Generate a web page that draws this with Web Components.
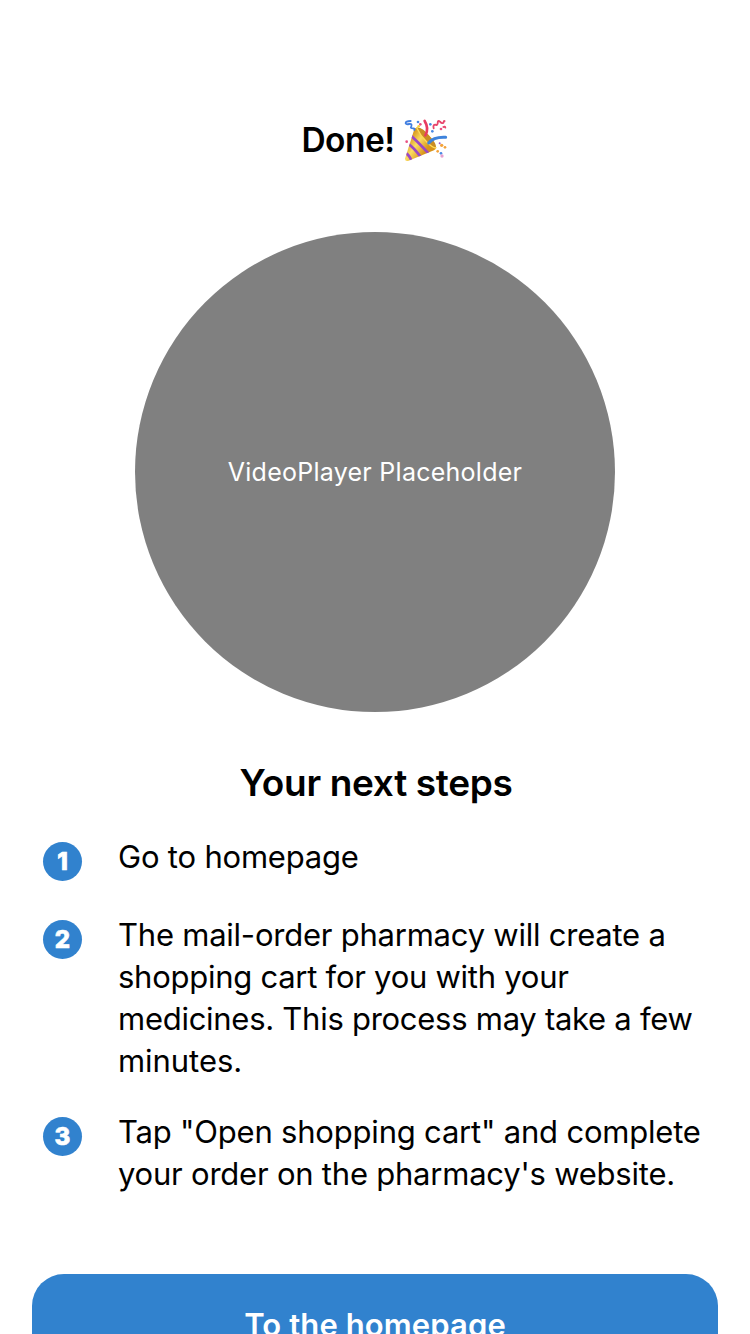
<!DOCTYPE html>
<html lang="en"><head><meta charset="utf-8"><title>Done</title>
<style>
html,body{margin:0;background:#fff;color:#000;font-family:Inter,"Liberation Sans",sans-serif}
body{height:1334px;overflow:hidden}
</style></head><body>
<order-done></order-done>
<script>
const define=(name,html)=>customElements.define(name,class extends HTMLElement{
  constructor(){super();this.attachShadow({mode:'open'}).innerHTML=html;}
});
define('party-popper',`<style>:host{display:block;width:50px;height:50px}svg{display:block}</style>
<svg width="50" height="50" viewBox="0 0 150 150" fill="none" stroke-linecap="round" stroke-linejoin="round">
<defs><linearGradient id="g" x1="25" y1="75" x2="75" y2="110" gradientUnits="userSpaceOnUse"><stop stop-color="#d99a20"/><stop offset=".45" stop-color="#fbdc62"/><stop offset="1" stop-color="#d8941c"/></linearGradient>
<clipPath id="c"><path d="M15 131L43 43Q48 35 57 39Q93 58 108 96Q109 103 102 106L24 138Q15 140 15 131Z"/></clipPath></defs>
<path d="M15 131L43 43Q48 35 57 39Q93 58 108 96Q109 103 102 106L24 138Q15 140 15 131Z" fill="url(#g)"/>
<g clip-path="url(#c)" stroke="#9a48c5" stroke-width="8"><path d="M34 63Q57 84 89 119"/><path d="M27 88Q40 97 61 124"/><path d="M17 114Q27 119 35 138"/></g>
<path d="M50 38Q66 36 88 62Q110 85 108 98Q101 102 81 82Q60 62 50 38Z" fill="#c98d25"/>
<path d="M50 38Q61 62 81 82Q101 102 108 98" stroke="#ffdc5a" stroke-width="4"/>
<path d="M76 61Q88 41 74 18" stroke="#e83b61" stroke-width="8"/>
<path d="M86 84Q101 65 137 67" stroke="#3e83dc" stroke-width="9"/>
<path d="M32 18Q16 18 17 25Q19 29 27 27Q37 25 34 34Q29 40 40 40Q46 41 43 45" stroke="#407ee0" stroke-width="5.5"/>
<path d="M101 40Q98 29 106 29Q112 32 113 25Q113 14 120 20Q126 28 131 22Q131 17 134 18M130 36Q135 33 136 38" stroke="#e8456c" stroke-width="5.5"/>
<g><g fill="#4989e4"><circle cx="54" cy="21" r="4"/><circle cx="91" cy="28" r="4"/><circle cx="123" cy="115" r="4"/><circle cx="97" cy="49" r="4"/></g><g fill="#f3a33b"><circle cx="125" cy="91" r="5"/><circle cx="135" cy="97" r="4"/><circle cx="113" cy="109" r="4"/></g><g fill="#e95183"><circle cx="20" cy="80" r="4"/><circle cx="61" cy="28" r="4"/><circle cx="123" cy="42" r="4"/></g><circle cx="126" cy="123" r="5" fill="#e6a1cf"/><circle cx="119" cy="85" r="3" fill="#9b59cf"/><circle cx="56" cy="34" r="4" fill="#f7d53e"/></g>
</svg>`);
define('page-title',`<style>:host{display:flex;justify-content:center;align-items:center;height:50px;padding-left:1px;font-weight:600;font-size:33.5px;line-height:50px}span{letter-spacing:-.5px;margin-right:5px;white-space:nowrap}</style><span><slot></slot></span><party-popper></party-popper>`);
define('video-placeholder',`<style>:host{display:flex;align-items:center;justify-content:center;width:480px;height:480px;margin:67px auto 0;border-radius:50%;background:#808080;color:#fff;font-size:25px;letter-spacing:.26px;white-space:nowrap}</style><slot></slot>`);
define('section-heading',`<style>:host{display:block;text-align:center;padding-left:2px;margin-top:47px;height:48px;line-height:48px;font-size:37px;font-weight:600;letter-spacing:-.33px}</style><slot></slot>`);
define('step-item',`<style>:host{display:grid;grid-template-columns:39px 1fr;column-gap:36px;padding-left:43px;font-size:31px;line-height:42px}
.n{width:39px;height:39px;margin-top:6px;border-radius:50%;background:#3182ce;color:#fff;font-size:24px;font-weight:800;line-height:39px;text-align:center;-webkit-text-stroke:.7px #fff}
</style><div class="n"><slot name="number"></slot></div><div><slot></slot></div>`);
define('text-line',`<style>:host{display:block;white-space:nowrap;letter-spacing:var(--track,-.2px)}</style><slot></slot>`);
define('primary-button',`<style>:host{display:block;margin:79px 32px 0;height:102px;border-radius:32px;background:#3182ce;color:#fff;text-align:center;font-weight:600;font-size:31px;letter-spacing:.1px;line-height:102px}</style><slot></slot>`);
define('order-done',`<style>:host{display:block;padding-top:115px}.steps{display:grid;margin-top:29px}
.steps step-item:nth-child(2){margin-top:33px}.steps step-item:nth-child(3){margin-top:29px}
</style>
<page-title>Done!</page-title>
<video-placeholder>VideoPlayer Placeholder</video-placeholder>
<section-heading>Your next steps</section-heading>
<div class="steps">
<step-item><span slot="number">1</span><text-line>Go to homepage</text-line></step-item>
<step-item><span slot="number">2</span><text-line style="--track:-.23px">The mail-order pharmacy will create a</text-line><text-line style="--track:-.26px">shopping cart for you with your</text-line><text-line style="--track:-.27px">medicines. This process may take a few</text-line><text-line style="--track:-.05px">minutes.</text-line></step-item>
<step-item><span slot="number">3</span><text-line>Tap "Open shopping cart" and complete</text-line><text-line style="--track:-.22px">your order on the pharmacy's website.</text-line></step-item>
</div>
<primary-button>To the homepage</primary-button>`);
</script></body></html>
